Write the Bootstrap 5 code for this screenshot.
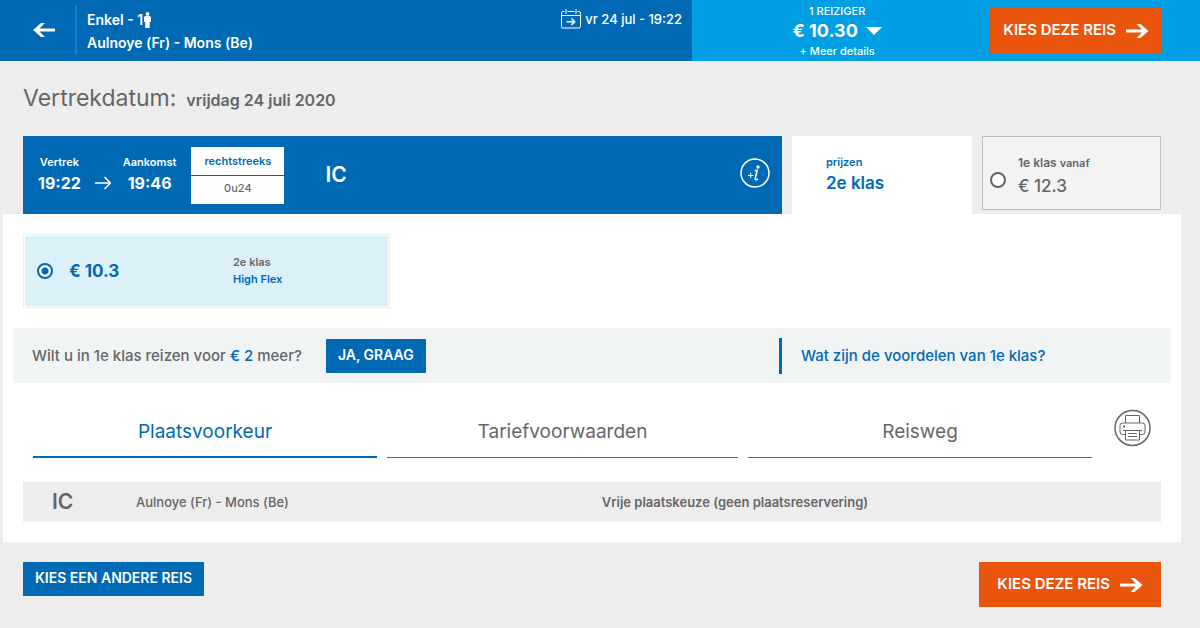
<!DOCTYPE html>
<html lang="nl">
<head>
<meta charset="utf-8">
<meta name="viewport" content="width=device-width, initial-scale=1">
<title>Kies uw reis</title>
<link href="https://cdn.jsdelivr.net/npm/bootstrap@5.3.0/dist/css/bootstrap.min.css" rel="stylesheet">
<style>
:root{--rail:#0069b4;--sky:#009fe3;--orange:#e9550d;--ink:#666}
body{background:#ededed;color:var(--ink);font-family:Inter,"Liberation Sans",sans-serif;font-size:13px;line-height:20px;font-weight:500}
a{color:inherit;text-decoration:none}
svg{display:block;flex:none}
.plain{background:none;border:0;padding:0;color:inherit;font-weight:inherit}
.blue{color:var(--rail)}
.t-xs{font-size:11px;line-height:16px}
.t-sm{font-size:12px;line-height:20px}
.t-md{font-size:15px;line-height:23px}
.t-time{font-size:16px;line-height:26px;font-weight:700}
.t-lg{font-size:17px;line-height:26px}
.t-price{font-size:18px;line-height:24px;font-weight:700}
.t-xl{font-size:21px;line-height:30px}
.semi{font-weight:600}
.topbar{min-height:61px;color:#fff}
.topbar-trip{flex:0 0 57.667%;background:var(--rail);padding:5px 10px 6px 33px}
.topbar-text{border-left:2px solid #0f80d8;margin-left:19px;padding:3px 0 1px 10px;font-size:14px;line-height:23px;font-weight:600}
.topbar-price{background:var(--sky);padding-right:38px}
.btn{--bs-btn-border-radius:0;--bs-btn-border-width:0;--bs-btn-color:#fff;--bs-btn-hover-color:#fff;--bs-btn-font-weight:600}
.btn-rail{--bs-btn-bg:var(--rail);--bs-btn-hover-bg:#00568f;--bs-btn-font-size:14px;height:34px;padding:0 12px 2px;line-height:20px}
.btn-go{--bs-btn-bg:var(--orange);--bs-btn-hover-bg:#c9470a;--bs-btn-font-size:15px;height:45px;padding:0 13px;gap:10px}
.btn-go-wide{padding:0 18px}
.content{padding:0 39px 0 23px}
.heading-date{font-size:23px;line-height:32px;font-weight:400;margin:21px 0 20px;gap:10px}
.heading-date strong{font-size:16px;font-weight:600}
.journey{gap:10px}
.journey-main{background:var(--rail);color:#fff;min-height:77px;padding:0 12px 0 15px}
.journey-arrow{margin:16px 12px 0 14px}
.duration{width:93px;height:57px;background:#fff;color:var(--ink);margin-left:15px}
.duration div{line-height:28px;font-size:11px}
.duration div+div{border-top:1px solid var(--rail);line-height:24px}
.train{margin-left:41px}
.class-tab{flex:0 0 180px}
.class-tab.active{background:#fff;padding:18px 34px}
.class-tab.other{flex-basis:179px;background:#f3f3f3;border:1px solid #bfbfbf;margin-bottom:4px;padding:14px 7px 0;gap:12px}
.other-text{padding-bottom:8px}
.form-check-input{margin:0;width:16px;height:16px;flex:none;border:2px solid var(--ink);background:#fff}
.form-check-input:checked{border-color:var(--rail);background:#fff}
.form-check-input:checked[type=radio]{background-image:radial-gradient(circle,var(--rail) 3px,#fff 4px)}
.panel{background:#fff;margin:0 19px 0 3px;padding:20px 10px}
.fare{width:calc(33.333% - 19px);min-height:74px;margin-left:10px;background:#dcf0fa;border:2px solid #fff;outline:1px solid #e1f2fb;outline-offset:-1px;padding:0 12px}
.fare-price{flex:0 0 180px;padding-left:16px}
.fare-name{font-size:11px;line-height:17px;font-weight:600}
.upsell{background:#f0f4f5;margin-top:20px;min-height:55px}
.upsell-offer{flex:0 0 calc(66.667% - 6px);padding-left:19px;gap:24px}
.upsell-info{border-left:3px solid var(--rail);line-height:36px;padding-left:19px}
.tabs{display:grid;grid-template-columns:344fr 351fr 344fr;gap:10px}
.tabs button{border-bottom:1px solid var(--ink);font-size:19px;line-height:28px;font-weight:400;padding:12px 0 11px}
.tabs button.active{border-bottom:2px solid var(--rail);color:var(--rail);padding-bottom:10px}
.tabs-row{margin:23px 20px 0;gap:22px}
.seat{background:#ededed;margin:24px 10px 0;padding-left:29px}
.seat table{color:inherit}
.seat th{font-size:21px;font-weight:600;width:84px}
.seat td,.seat th{padding:0;line-height:40px}
.seat-route{width:42%}
.seat-route + td{font-weight:600}
</style>
</head>
<body>
<header class="topbar d-flex align-items-stretch">
  <div class="topbar-trip d-flex align-items-stretch">
    <button class="plain" aria-label="Terug"><svg width="23" height="14" viewBox="0 0 23 14"><path d="M0 7 8 0h4L6.500 5.500H22v3H6.500L12 14H8z" fill="#fff"/></svg></button>
    <div class="topbar-text flex-grow-1">
      <div class="d-flex align-items-center">Enkel - 1<svg width="8" height="16" viewBox="-1 0 8 16" fill="#fff"><circle cx="3.500" cy="2" r="1.900"/><path d="M1.500 4h4Q7 4 7 5.500V10H5.700v6H1.300v-6H0V5.500Q0 4 1.500 4z"/></svg></div>
      <div>Aulnoye (Fr) - Mons (Be)</div>
    </div>
    <div class="d-flex gap-1 align-self-start mt-1">
      <svg width="20" height="20" viewBox="0 0 20 20" fill="none" stroke="#fff"><path d="M3.500 2.500H2Q.5 2.500.5 4v13.500Q.5 19 2 19h16q1.500 0 1.500-1.500V4q0-1.500-1.500-1.500h-1.500M6.500 2.500h7M.5 6.500h19M5 0v5M15 0v5"/><path d="M5.500 12.700h8M10.500 9.500l3.200 3.200-3.200 3.200" stroke-width="1.500"/></svg>
      <span>vr 24 jul - 19:22</span>
    </div>
  </div>
  <div class="topbar-price flex-grow-1 d-flex align-items-center">
    <div class="flex-grow-1 d-flex flex-column align-items-center me-2">
      <div class="t-xs">1 REIZIGER</div>
      <button class="plain t-price d-flex align-items-center gap-2">€ 10.30 <svg width="16" height="8" viewBox="0 0 16 8"><path d="M0 0h16L8 8z" fill="#fff"/></svg></button>
      <a href="#" class="t-xs">+ Meer details</a>
    </div>
    <button class="btn btn-go d-flex align-items-center">KIES DEZE REIS <svg width="23" height="14" viewBox="0 0 23 14"><path d="M22.500 7 14.500 0h-4L16 5.500H0v3h16L10.500 14h4z" fill="#fff"/></svg></button>
  </div>
</header>
<main>
  <div class="content">
    <h1 class="heading-date d-flex align-items-baseline">Vertrekdatum: <strong>vrijdag 24 juli 2020</strong></h1>
    <div class="journey d-flex align-items-stretch">
      <section class="journey-main flex-grow-1 d-flex align-items-center">
        <div class="text-center"><div class="t-xs semi">Vertrek</div><div class="t-time">19:22</div></div>
        <svg class="journey-arrow" width="16" height="14" viewBox="0 0 16 14" fill="none" stroke="#fff" stroke-width="1.500"><path d="M0 7h15M9.500 1l6 6-6 6"/></svg>
        <div class="text-center"><div class="t-xs semi">Aankomst</div><div class="t-time">19:46</div></div>
        <div class="duration text-center"><div class="blue semi">rechtstreeks</div><div>0u24</div></div>
        <div class="train t-xl semi flex-grow-1">IC</div>
        <button class="plain" aria-label="Meer informatie"><svg width="30" height="34" viewBox="0 2 30 34" fill="none" stroke="#fff" stroke-width="1.500"><g transform="translate(0 2)"><circle cx="15" cy="15" r="14"/><path d="M8 17.500h5.500M10.700 14.700v5.500" stroke-width="1"/><path d="M14.700 12.500h2.500l-2 8q-.2 1.500 1.200 1.200l1.600-.7"/><circle cx="18" cy="9" r=".9" fill="#fff"/></g></svg></button>
      </section>
      <section class="class-tab active blue"><div class="t-xs semi">prijzen</div><div class="t-lg semi">2e klas</div></section>
      <label class="class-tab other d-flex align-items-center"><input class="form-check-input" type="radio" name="klas"><span class="other-text"><span class="d-block t-sm semi">1e klas <span class="t-xs">vanaf</span></span><span class="d-block t-lg">€ 12.3</span></span></label>
    </div>
  </div>
  <section class="panel">
    <label class="fare d-flex align-items-center"><input class="form-check-input" type="radio" name="tarief" checked><span class="fare-price t-lg fw-bold blue">€ 10.3</span><span class="fare-name">2e klas<br><span class="blue">High Flex</span></span></label>
    <div class="upsell d-flex align-items-center t-md">
      <div class="upsell-offer d-flex align-items-center"><span>Wilt u in 1e klas reizen voor <span class="blue">€ 2</span> meer?</span><button class="btn btn-rail">JA, GRAAG</button></div>
      <a href="#" class="upsell-info blue">Wat zijn de voordelen van 1e klas?</a>
    </div>
    <div class="tabs-row d-flex align-items-start">
      <nav class="tabs flex-grow-1"><button class="plain active">Plaatsvoorkeur</button><button class="plain">Tariefvoorwaarden</button><button class="plain">Reisweg</button></nav>
      <button class="plain" aria-label="Afdrukken"><svg width="37" height="44" viewBox="0 0 37 44" fill="none" stroke="#666"><circle cx="18.500" cy="22" r="17.500" stroke-width="1.500"/><path d="M11.500 17V9.500h14V17M11.500 28.500h-3q-2.500 0-2.500-2.500v-6.500Q6 17 8.500 17h20q2.500 0 2.500 2.500V26q0 2.500-2.500 2.500h-3M9 24.500h19M11.500 24.500V34h14v-9.500M14 27.500h9M14 30.500h9"/><path d="M9 20.500h2" stroke-width="2"/></svg></button>
    </div>
    <div class="seat"><table class="w-100"><tbody><tr><th scope="row">IC</th><td class="seat-route">Aulnoye (Fr) - Mons (Be)</td><td>Vrije plaatskeuze (geen plaatsreservering)</td></tr></tbody></table></div>
  </section>
  <div class="content d-flex justify-content-between align-items-start pt-3">
    <button class="btn btn-rail mt-1">KIES EEN ANDERE REIS</button>
    <button class="btn btn-go btn-go-wide d-flex align-items-center mt-1">KIES DEZE REIS <svg width="23" height="14" viewBox="0 0 23 14"><path d="M22.500 7 14.500 0h-4L16 5.500H0v3h16L10.500 14h4z" fill="#fff"/></svg></button>
  </div>
</main>
<script src="https://cdn.jsdelivr.net/npm/bootstrap@5.3.0/dist/js/bootstrap.bundle.min.js"></script>
</body>
</html>
